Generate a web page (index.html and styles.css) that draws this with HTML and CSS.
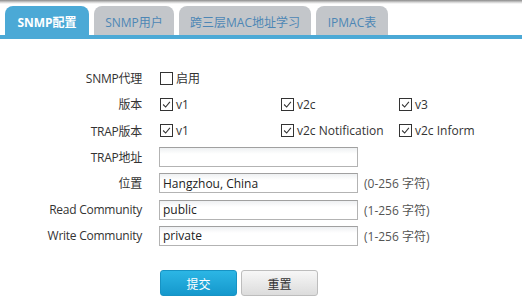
FILE: index.html
```html
<!DOCTYPE html>
<html lang="zh">
<head>
<meta charset="utf-8">
<title>SNMP配置</title>
<link rel="stylesheet" href="styles.css">
</head>
<body>
<div class="topshade"></div>
<nav class="tabs">
  <a class="tab active">SNMP配置</a>
  <a class="tab w80">SNMP用户</a>
  <a class="tab w132">跨三层MAC地址学习</a>
  <a class="tab w72">IPMAC表</a>
</nav>
<div class="tabline"></div>
<form class="form">
  <div class="row">
    <span class="label">SNMP代理</span>
    <div class="ctrl">
      <label class="chk"><span class="box"></span>启用</label>
    </div>
  </div>
  <div class="row">
    <span class="label">版本</span>
    <div class="ctrl">
      <label class="chk c1"><span class="box"><svg viewBox="0 0 13 13"><path d="M2.5 6.5 L5.5 9.5 L10.5 3.5" fill="none" stroke="#333" stroke-width="1.3"/></svg></span>v1</label>
      <label class="chk c2"><span class="box"><svg viewBox="0 0 13 13"><path d="M2.5 6.5 L5.5 9.5 L10.5 3.5" fill="none" stroke="#333" stroke-width="1.3"/></svg></span>v2c</label>
      <label class="chk"><span class="box"><svg viewBox="0 0 13 13"><path d="M2.5 6.5 L5.5 9.5 L10.5 3.5" fill="none" stroke="#333" stroke-width="1.3"/></svg></span>v3</label>
    </div>
  </div>
  <div class="row">
    <span class="label">TRAP版本</span>
    <div class="ctrl">
      <label class="chk c1"><span class="box"><svg viewBox="0 0 13 13"><path d="M2.5 6.5 L5.5 9.5 L10.5 3.5" fill="none" stroke="#333" stroke-width="1.3"/></svg></span>v1</label>
      <label class="chk c2"><span class="box"><svg viewBox="0 0 13 13"><path d="M2.5 6.5 L5.5 9.5 L10.5 3.5" fill="none" stroke="#333" stroke-width="1.3"/></svg></span>v2c Notification</label>
      <label class="chk"><span class="box"><svg viewBox="0 0 13 13"><path d="M2.5 6.5 L5.5 9.5 L10.5 3.5" fill="none" stroke="#333" stroke-width="1.3"/></svg></span>v2c Inform</label>
    </div>
  </div>
  <div class="row">
    <span class="label">TRAP地址</span>
    <div class="ctrl"><input class="txt" type="text" value=""></div>
  </div>
  <div class="row">
    <span class="label">位置</span>
    <div class="ctrl"><input class="txt" type="text" value="Hangzhou, China"><span class="hint">(0-256 字符)</span></div>
  </div>
  <div class="row">
    <span class="label">Read Community</span>
    <div class="ctrl"><input class="txt" type="text" value="public"><span class="hint">(1-256 字符)</span></div>
  </div>
  <div class="row">
    <span class="label">Write Community</span>
    <div class="ctrl"><input class="txt" type="text" value="private"><span class="hint">(1-256 字符)</span></div>
  </div>
  <div class="buttons">
    <button type="button" class="btn primary">提交</button>
    <button type="button" class="btn">重置</button>
  </div>
</form>
</body>
</html>
```
FILE: styles.css
```css
html, body {
  margin: 0;
  padding: 0;
  background: #fff;
  font-family: "Open Sans", "Noto Sans CJK SC", sans-serif;
  font-size: 12px;
  color: #333;
}
.topshade {
  height: 4px;
  background: linear-gradient(#8a8a8a, #d8d8d8 60%, #fff);
}
.tabs {
  display: flex;
  gap: 5px;
  padding-left: 5px;
  margin-top: 2px;
  height: 29px;
}
.tab {
  display: flex;
  align-items: center;
  justify-content: center;
  height: 29px;
  border-radius: 8px 8px 0 0;
  background: #c3c6ca;
  color: #4d86b5;
  font-size: 12px;
  box-sizing: border-box;
  padding-top: 3px;
}
.tab.active {
  width: 84px;
  background: #4ba9d6;
  color: #fff;
  font-weight: bold;
}
.w80 { width: 80px; }
.w132 { width: 132px; }
.w72 { width: 72px; }
.tabline {
  height: 4px;
  background: #4ba9d6;
}
.form {
  margin: 26px 0 0 0;
}
.row {
  display: grid;
  grid-template-columns: 142px 1fr;
  column-gap: 17px;
  height: 26.3px;
  align-items: center;
}
.label {
  text-align: right;
  white-space: nowrap;
  letter-spacing: -0.25px;
}
.ctrl {
  display: flex;
  align-items: center;
}
.chk {
  display: inline-flex;
  align-items: center;
  gap: 3px;
  white-space: nowrap;
}
.c1 { width: 121px; }
.c2 { width: 118px; }
.box {
  width: 11px;
  height: 11px;
  border: 1px solid #333;
  background: #fff;
  display: inline-block;
  margin-left: 1px;
}
.box svg {
  width: 11px;
  height: 11px;
  display: block;
}
.txt {
  width: 199px;
  height: 20px;
  box-sizing: border-box;
  border: 1px solid #b3b3b3;
  border-top-color: #a0a0a0;
  background: linear-gradient(#eef0f2, #fff 6px);
  font-family: "Open Sans", sans-serif;
  font-size: 12px;
  color: #222;
  padding: 0 3px;
  margin: 0;
  outline: none;
}
.hint {
  margin-left: 6px;
  color: #555;
}
.buttons {
  display: flex;
  gap: 4px;
  margin: 21px 0 0 160px;
}
.btn {
  width: 77px;
  height: 26px;
  border-radius: 3px;
  border: 1px solid #bdbdbd;
  background: linear-gradient(#f7f7f7, #dcdcdc);
  font-family: "Noto Sans CJK SC", sans-serif;
  font-size: 12px;
  color: #333;
  padding: 0;
}
.btn.primary {
  border-color: #1793c4;
  background: linear-gradient(#2cb6e5, #1598cc);
  color: #fff;
}
```
